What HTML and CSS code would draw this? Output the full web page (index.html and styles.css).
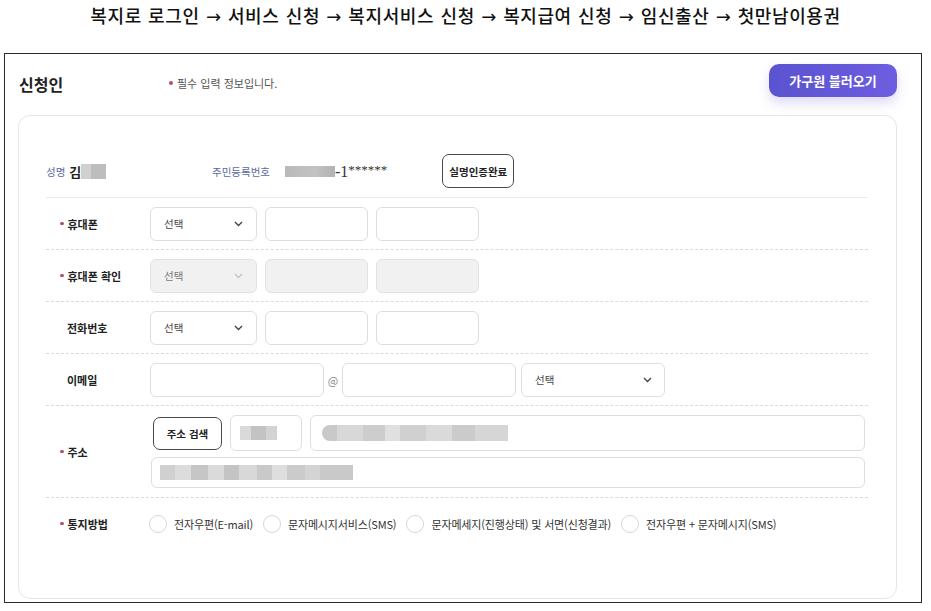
FILE: index.html
```html
<!DOCTYPE html>
<html lang="ko">
<head>
<meta charset="utf-8">
<link rel="stylesheet" href="styles.css">
</head>
<body>
<h1 class="crumb">복지로 로그인 → 서비스 신청 → 복지서비스 신청 → 복지급여 신청 → 임신출산 → 첫만남이용권</h1>
<div class="frame">
  <div class="head">
    <h2 class="title">신청인</h2>
    <p class="note"><span class="dot"></span>필수 입력 정보입니다.</p>
    <button class="load-btn">가구원 블러오기</button>
  </div>
  <div class="card">
    <div class="name-row">
      <div class="name-group">
        <span class="meta-label">성명</span>
        <span class="name-first">김</span>
        <span class="blur blur-name"></span>
      </div>
      <span class="meta-label">주민등록번호</span>
      <span class="blur blur-id"></span>
      <span class="id-tail">-1<span class="stars">******</span></span>
      <button class="outline-btn verify-btn">실명인증완료</button>
    </div>

    <div class="row">
      <div class="label req"><span class="dot"></span>휴대폰</div>
      <div class="controls">
        <div class="select w107"><span>선택</span><svg width="9" height="6" viewBox="0 0 9 6"><path d="M1 1l3.5 3.5L8 1" fill="none" stroke="#444" stroke-width="1.4"/></svg></div>
        <div class="input w103"></div>
        <div class="input w103"></div>
      </div>
    </div>

    <div class="row">
      <div class="label req"><span class="dot"></span>휴대폰 확인</div>
      <div class="controls">
        <div class="select w107 disabled"><span>선택</span><svg width="9" height="6" viewBox="0 0 9 6"><path d="M1 1l3.5 3.5L8 1" fill="none" stroke="#c4c4c4" stroke-width="1.4"/></svg></div>
        <div class="input w103 disabled"></div>
        <div class="input w103 disabled"></div>
      </div>
    </div>

    <div class="row">
      <div class="label">전화번호</div>
      <div class="controls">
        <div class="select w107"><span>선택</span><svg width="9" height="6" viewBox="0 0 9 6"><path d="M1 1l3.5 3.5L8 1" fill="none" stroke="#444" stroke-width="1.4"/></svg></div>
        <div class="input w103"></div>
        <div class="input w103"></div>
      </div>
    </div>

    <div class="row">
      <div class="label">이메일</div>
      <div class="controls">
        <div class="input w174"></div>
        <span class="at">@</span>
        <div class="input w174"></div>
        <div class="select w144 ml5"><span>선택</span><svg width="9" height="6" viewBox="0 0 9 6"><path d="M1 1l3.5 3.5L8 1" fill="none" stroke="#444" stroke-width="1.4"/></svg></div>
      </div>
    </div>

    <div class="row addr-row">
      <div class="label req"><span class="dot"></span>주소</div>
      <div class="addr">
        <div class="addr-line">
          <button class="outline-btn search-btn">주소 검색</button>
          <div class="input zip"><span class="blur blur-zip"></span></div>
          <div class="input addr-main"><span class="blur blur-addr1"></span></div>
        </div>
        <div class="input addr-sub"><span class="blur blur-addr2"></span></div>
      </div>
    </div>

    <div class="row notice-row">
      <div class="label req"><span class="dot"></span>통지방법</div>
      <div class="radios">
        <label class="radio"><span class="circle"></span>전자우편(E-mail)</label>
        <label class="radio"><span class="circle"></span>문자메시지서비스(SMS)</label>
        <label class="radio"><span class="circle"></span>문자메세지(진행상태) 및 서면(신청결과)</label>
        <label class="radio"><span class="circle"></span>전자우편 + 문자메시지(SMS)</label>
      </div>
    </div>
  </div>
</div>
</body>
</html>
```

FILE: styles.css
```css
* { box-sizing: border-box; }
html, body { margin: 0; padding: 0; background: #fff; }
body {
  font-family: "Noto Sans CJK KR", "Noto Sans", sans-serif;
  color: #222;
  width: 931px;
  height: 611px;
  overflow: hidden;
}
.crumb {
  margin: 0;
  padding-top: 4px;
  height: 29px;
  line-height: 26px;
  text-align: center;
  font-family: "DejaVu Sans", "Noto Sans CJK KR", sans-serif;
  font-size: 18px;
  font-weight: 500;
  color: #111;
  letter-spacing: 0.6px;
}
.frame {
  margin: 24px 0 0 4px;
  width: 918px;
  height: 550px;
  border: 1px solid #2a2a2a;
  padding: 10px 24px 3px 13px;
  display: flex;
  flex-direction: column;
}
.head {
  display: flex;
  align-items: center;
  height: 33px;
  margin-bottom: 18px;
  padding-left: 1px;
}
.title {
  margin: 0;
  width: 150px;
  font-size: 16px;
  font-weight: 700;
  color: #222;
  position: relative;
  top: 3px;
}
.note {
  margin: 0;
  font-size: 11px;
  color: #555;
  display: flex;
  align-items: center;
  position: relative;
  top: 2px;
}
.dot {
  display: inline-block;
  width: 4px;
  height: 4px;
  border-radius: 50%;
  background: #b0506a;
  margin-right: 4px;
  flex: none;
}
.load-btn {
  margin-left: auto;
  width: 128px;
  height: 33px;
  border: none;
  border-radius: 10px;
  background: linear-gradient(90deg, #5a53cf, #6e5de0);
  color: #fff;
  font-family: inherit;
  font-size: 13px;
  font-weight: 700;
  box-shadow: 0 6px 12px rgba(98, 86, 212, 0.22);
  padding: 0;
}
.card {
  flex: 1;
  border: 1px solid #e6e6e6;
  border-radius: 12px;
  padding: 30px 28px 0 27px;
}
.name-row {
  display: flex;
  align-items: center;
  height: 52px;
  border-bottom: 1px solid #ebebeb;
  padding-bottom: 1px;
}
.name-group {
  width: 166px;
  display: flex;
  align-items: center;
}
.meta-label {
  font-size: 10.5px;
  color: #5a6aa0;
}
.name-first {
  font-size: 13px;
  font-weight: 700;
  color: #222;
  margin-left: 4px;
}
.blur {
  display: inline-block;
  filter: blur(0.6px);
}
.blur-name {
  width: 25px;
  height: 15px;
  background: linear-gradient(90deg, #d0d0d0 0 40%, #bdbdbd 40% 100%);
}
.blur-id {
  width: 50px;
  height: 11px;
  margin-left: 15px;
  background: linear-gradient(90deg, #b9b9b9, #c2c2c2 60%, #b3b3b3);
}
.id-tail {
  font-family: "Liberation Serif", serif;
  font-size: 16px;
  color: #333;
}
.stars {
  font-size: 13px;
  vertical-align: 3px;
}
.outline-btn {
  background: #fff;
  border: 1px solid #4a4a4a;
  border-radius: 7px;
  font-family: inherit;
  font-weight: 700;
  color: #222;
  padding: 0;
}
.verify-btn {
  margin-left: 55px;
  width: 72px;
  height: 34px;
  font-size: 10.5px;
}
.row {
  display: flex;
  align-items: center;
  min-height: 52px;
  border-bottom: 1px dashed #dadada;
}
.label {
  width: 104px;
  flex: none;
  padding-left: 21px;
  font-size: 11px;
  font-weight: 700;
  color: #222;
  display: flex;
  align-items: center;
}
.label.req { padding-left: 14px; }
.label .dot { width: 3.5px; height: 3.5px; }
.controls {
  display: flex;
  align-items: center;
  gap: 8px;
}
.select, .input {
  height: 34px;
  border: 1px solid #dedede;
  border-radius: 6px;
  background: #fff;
  flex: none;
}
.select {
  display: flex;
  align-items: center;
  justify-content: space-between;
  padding: 0 13px;
  font-size: 10.5px;
  color: #444;
}
.select.disabled, .input.disabled {
  background: #f1f1f1;
  border-color: #e2e2e2;
}
.select.disabled { color: #777; }
.w107 { width: 107px; }
.w103 { width: 103px; }
.w174 { width: 174px; }
.w144 { width: 144px; padding-right: 12px; }
.ml5 { margin-left: -3px; }
.at {
  width: 18px;
  margin: 0 -8px;
  text-align: center;
  font-size: 11px;
  color: #888;
}
.addr {
  flex: 1;
  display: flex;
  flex-direction: column;
  gap: 6px;
  padding: 9px 3px 9px 0;
}
.addr-line {
  display: flex;
  align-items: center;
  gap: 8px;
}
.search-btn {
  margin-left: 3px;
  width: 69px;
  height: 33px;
  font-size: 10.5px;
}
.zip {
  width: 72px;
  height: 36px;
  display: flex;
  align-items: center;
  padding-left: 9px;
}
.addr-main {
  flex: 1;
  height: 36px;
  display: flex;
  align-items: center;
  padding-left: 11px;
}
.addr-sub {
  height: 31px;
  display: flex;
  align-items: center;
  padding-left: 8px;
  margin-left: 1px;
}
.blur-zip {
  width: 37px;
  height: 14px;
  background: linear-gradient(90deg, #dadada 0 30%, #c3c3c3 30% 70%, #d3d3d3 70%);
}
.blur-addr1 {
  width: 186px;
  height: 16px;
  border-radius: 8px 0 0 8px;
  background: linear-gradient(90deg, #c9c9c9 0 8%, #d8d8d8 8% 22%, #cdcdcd 22% 34%, #e0e0e0 34% 42%, #d0d0d0 42% 56%, #dadada 56% 70%, #cbcbcb 70% 82%, #d6d6d6 82%);
}
.blur-addr2 {
  width: 193px;
  height: 15px;
  background: linear-gradient(90deg, #d0d0d0 0 8%, #dcdcdc 8% 16%, #c6c6c6 16% 25%, #dadada 25% 33%, #c4c4c4 33% 41%, #d8d8d8 41% 50%, #c9c9c9 50% 58%, #dedede 58% 66%, #cbcbcb 66% 75%, #d4d4d4 75% 83%, #c9c9c9 83% 100%);
}
.notice-row {
  border-bottom: none;
  min-height: 51px;
}
.radios {
  display: flex;
  align-items: center;
  margin-left: -1px;
}
.radio {
  display: flex;
  align-items: center;
  font-size: 11px;
  color: #333;
  margin-right: 10px;
  letter-spacing: -0.15px;
}
.circle {
  width: 18px;
  height: 18px;
  border: 1px solid #d6d6d6;
  border-radius: 50%;
  margin-right: 7px;
  background: #fff;
}
```
